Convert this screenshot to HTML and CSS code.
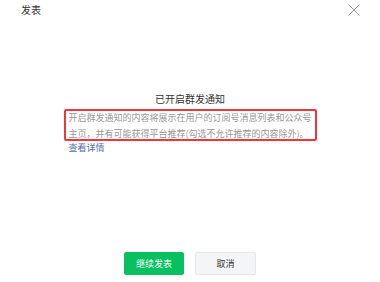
FILE: index.html
```html
<!DOCTYPE html>
<html lang="zh">
<head>
<meta charset="utf-8">
<link rel="stylesheet" href="styles.css">
</head>
<body>
<div class="dialog">
  <div class="header">
    <span class="title">发表</span>
    <svg class="close" width="12" height="12" viewBox="0 0 12 12"><path d="M0.5 0.5 L11.5 11.5 M11.5 0.5 L0.5 11.5" stroke="#9a9a9a" stroke-width="1" fill="none"/></svg>
  </div>
  <div class="content">
    <div class="heading">已开启群发通知</div>
    <div class="body">
      <p class="desc">开启群发通知的内容将展示在用户的订阅号消息列表和公众号主页，并有可能获得平台推荐(勾选不允许推荐的内容除外)。</p>
      <a class="link">查看详情</a>
    </div>
  </div>
  <div class="actions">
    <button class="btn primary">继续发表</button>
    <button class="btn default">取消</button>
  </div>
</div>
</body>
</html>
```
FILE: styles.css
```css
html, body {
  margin: 0;
  padding: 0;
  background: #ffffff;
}
body {
  font-family: "Noto Sans CJK SC", "Noto Sans", sans-serif;
  color: #353535;
}
.dialog {
  width: 380px;
  height: 282px;
  display: flex;
  flex-direction: column;
}
.header {
  height: 20px;
  display: flex;
  align-items: center;
  justify-content: space-between;
  padding: 0 20px 0 21px;
}
.title {
  font-size: 10px;
  line-height: 20px;
  color: #353535;
}
.close {
  display: block;
}
.content {
  padding-top: 72px;
  display: flex;
  flex-direction: column;
  align-items: center;
}
.heading {
  font-size: 10px;
  line-height: 14px;
  color: #353535;
}
.body {
  width: 244px;
  margin: 4px 0 0 0;
  padding-left: 1px;
}
.desc {
  position: relative;
  margin: 0;
  font-size: 9px;
  line-height: 16px;
  color: #999999;
}
.desc::after {
  content: "";
  position: absolute;
  top: -1px;
  left: -5px;
  right: -4px;
  bottom: 1px;
  border: 2px solid #f0353b;
  border-radius: 2px;
}
.link {
  display: block;
  font-size: 9px;
  line-height: 11px;
  color: #5470b0;
}
.actions {
  margin-top: auto;
  margin-bottom: 7px;
  display: flex;
  justify-content: center;
  gap: 11px;
}
.btn {
  height: 23px;
  border-radius: 2px;
  font-family: "Noto Sans CJK SC", sans-serif;
  font-size: 9px;
  padding: 0;
  box-sizing: border-box;
}
.primary {
  width: 60px;
  background: #07c160;
  color: #ffffff;
  border: none;
}
.default {
  width: 61px;
  background: #f4f5f7;
  color: #353535;
  border: 1px solid #e7e8eb;
}
```
